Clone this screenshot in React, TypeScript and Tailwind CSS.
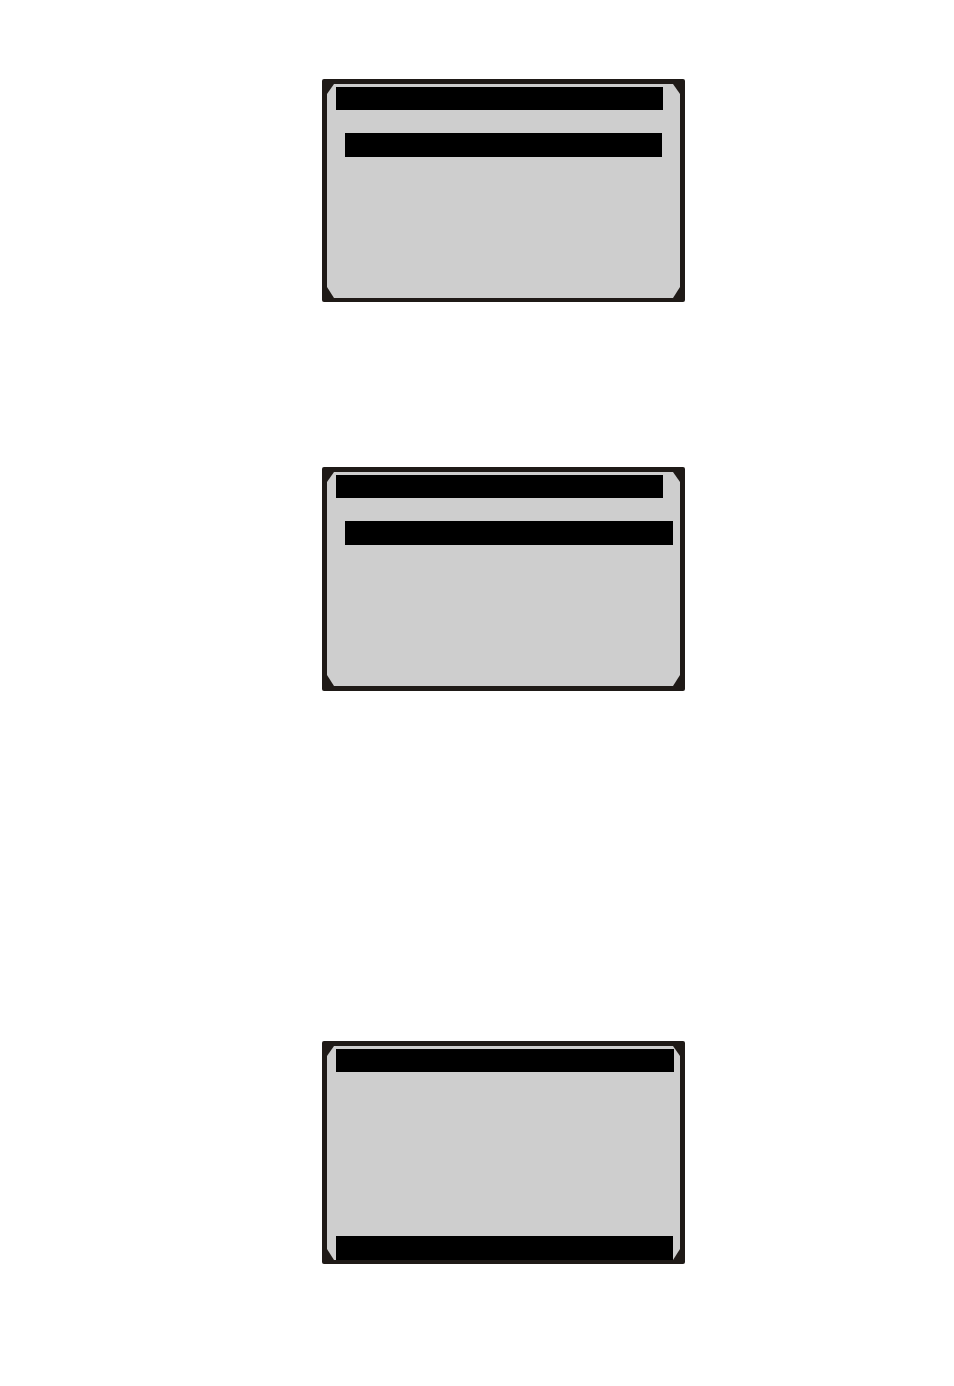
import React from 'react';

interface LcdScreenProps {
  className?: string;
  children: React.ReactNode;
}

// Dark bezel with a grey display whose corners are cut off
const LcdScreen: React.FC<LcdScreenProps> = ({ className = 'h-[223px] pb-1', children }) => {
  return (
    <section className={`flex w-full max-w-[363px] rounded-xs bg-[#1f1a17] px-[5px] pt-[5px] ${className}`}>
      <div className="flex w-full flex-col bg-[#cecece] pt-[3px] [clip-path:polygon(7px_0,calc(100%-7px)_0,100%_10px,100%_calc(100%-11px),calc(100%-7px)_100%,7px_100%,0_calc(100%-11px),0_10px)]">
        {children}
      </div>
    </section>
  );
};

export default function App() {
  return (
    <main className="flex flex-col bg-white pt-[79px] pr-4 pb-[122px] pl-[322px]">
      <LcdScreen>
        <div className="mr-[17px] ml-[9px] h-[23px] bg-black" />
        <div className="mt-[23px] mr-[18px] ml-[18px] h-6 bg-black" />
      </LcdScreen>

      <LcdScreen className="mt-[165px] h-56 pb-[5px]">
        <div className="mr-[17px] ml-[9px] h-[23px] bg-black" />
        <div className="mt-[23px] mr-[7px] ml-[18px] h-6 bg-black" />
      </LcdScreen>

      <LcdScreen className="mt-[350px] h-[223px] pb-1">
        <div className="mr-[6px] ml-[9px] h-[23px] bg-black" />
        {/* Footer bar sits on the bottom edge of the display */}
        <div className="mt-auto mr-[7px] ml-[9px] h-6 bg-black" />
      </LcdScreen>
    </main>
  );
}
